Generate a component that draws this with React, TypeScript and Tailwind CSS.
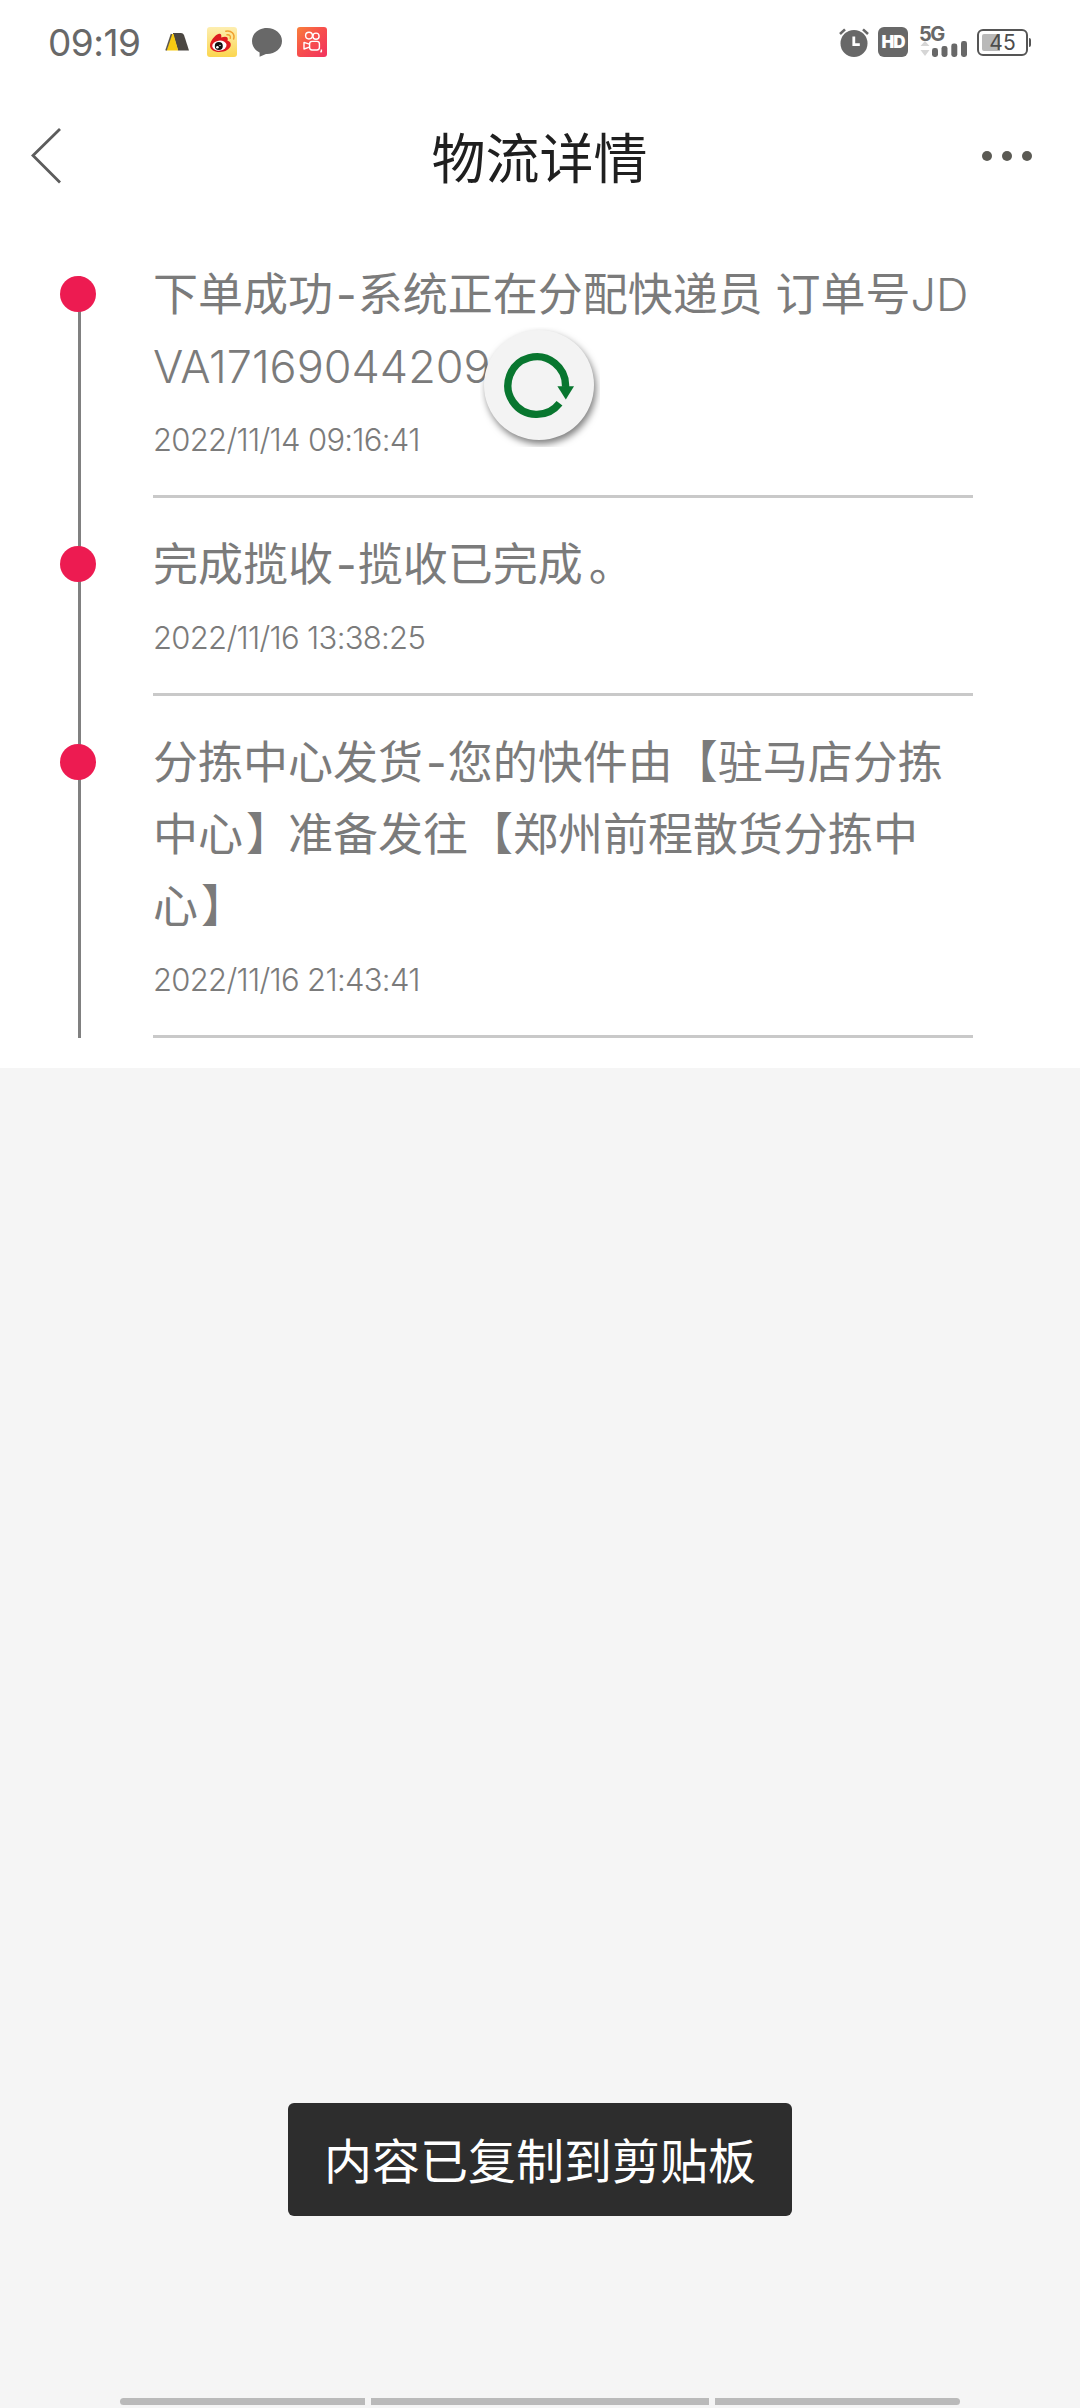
import type { ReactNode } from "react";

const Dash = () => <span className="pl-[3px] pr-[1px]">-</span>;
const Close = () => <span className="mr-[-3px] pl-[3px]">】</span>;

const steps: { lines: ReactNode[]; time: string }[] = [
  {
    lines: [
      <>下单成功<Dash />系统正在分配快递员 订单号<span className="font-[350]">JD</span></>,
      <span className="font-[350]">VA17169044209</span>,
    ],
    time: "2022/11/14 09:16:41",
  },
  {
    lines: [<>完成揽收<Dash />揽收已完成<span className="pl-1.5">。</span></>],
    time: "2022/11/16 13:38:25",
  },
  {
    lines: [
      <>分拣中心发货<Dash />您的快件由【驻马店分拣</>,
      <>中心<Close />准备发往【郑州前程散货分拣中</>,
      <>心<Close /></>,
    ],
    time: "2022/11/16 21:43:41",
  },
];

function TentIcon() {
  return (
    <svg width="24" height="18" viewBox="0 0 24 18">
      <path d="M8 0H16Q18 0 19 2L24 17.5H13L8 1Z" fill="#4b4742" />
      <path d="M6.2 1L8.5 1L13.2 17.5H1.6Z" fill="#f8cb12" />
      <path d="M6.5 1L1 17.5" stroke="#5a564e" strokeWidth="1.5" />
    </svg>
  );
}

function WeiboIcon() {
  return (
    <svg width="30" height="30" viewBox="0 0 30 30">
      <defs>
        <linearGradient id="wb" x1="0" y1="0" x2="0" y2="1">
          <stop offset="0" stopColor="#fdeeb0" />
          <stop offset="1" stopColor="#fbd64f" />
        </linearGradient>
      </defs>
      <rect width="30" height="30" rx="3" fill="url(#wb)" />
      <path
        d="M3 18.5C3 14 8 8 11.5 7C14 6.4 14.8 8 14.2 10.6C17 9.4 21 9 20.8 12.2C20.8 13 20.5 13.4 20.4 13.8C22.6 14.3 24 15.8 23.8 18C23.4 22.2 18 25 12.4 25C7 25 3 22.4 3 18.5Z"
        fill="#dd1a1f"
      />
      <ellipse cx="12.4" cy="18.6" rx="7.2" ry="5" fill="#fff" transform="rotate(-8 12.4 18.6)" />
      <circle cx="11.8" cy="19" r="4" fill="#111" />
      <circle cx="10.4" cy="20.2" r="1.3" fill="#fff" />
      <circle cx="13" cy="18.4" r="0.7" fill="#fff" />
      <path d="M18.8 4.2C24.2 3 28.3 7 26.6 12" fill="none" stroke="#f0a030" strokeWidth="1.5" strokeLinecap="round" />
      <path d="M20 7.8C22.6 7.4 24 9.2 23.2 11.4" fill="none" stroke="#f0a030" strokeWidth="1.4" strokeLinecap="round" />
    </svg>
  );
}

function ChatIcon() {
  return (
    <svg width="30" height="29" viewBox="0 0 30 29">
      <path
        d="M15 0C23.4 0 30 5.6 30 13C30 20.4 23.4 26 15 26H14L7.6 28.8V24.4C3 22.4 0 18.2 0 13C0 5.6 6.6 0 15 0Z"
        fill="#686868"
      />
    </svg>
  );
}

function KuaishouIcon() {
  return (
    <svg width="30" height="30" viewBox="0 0 30 30" fill="none" stroke="#fff" strokeWidth="1.4">
      <defs>
        <linearGradient id="ks" x1="0" y1="0" x2="1" y2="1">
          <stop offset="0" stopColor="#f9803a" />
          <stop offset="0.45" stopColor="#f7504c" />
          <stop offset="1" stopColor="#f2325f" />
        </linearGradient>
      </defs>
      <rect width="30" height="30" rx="3" fill="url(#ks)" stroke="none" />
      <circle cx="12" cy="8.6" r="3.4" />
      <circle cx="19" cy="9.2" r="3.1" />
      <rect x="12.6" y="14.4" width="9.8" height="8.6" rx="2.4" />
      <path d="M12.4 17.2L7 15.4V22L12.4 20.2" strokeLinejoin="round" />
      <path d="M24.4 22.6V24.2L23.6 25.4" />
    </svg>
  );
}

function AlarmIcon() {
  return (
    <svg width="30" height="30" viewBox="0 0 30 30">
      <circle cx="15" cy="16.4" r="13.5" fill="#686868" />
      <path d="M1 7L6 2.4M29 7L24 2.4" stroke="#686868" strokeWidth="2.6" />
      <path d="M14.8 9.4V17.6H20.8" fill="none" stroke="#fff" strokeWidth="2.8" />
    </svg>
  );
}

function SignalIcon() {
  return (
    <div className="flex h-[30px] w-[48px] flex-col justify-between">
      <span className="-ml-px h-[15px] text-[20px] leading-[15px] font-bold tracking-[-1.5px]">5G</span>
      <svg className="-mt-[2px]" width="48" height="17" viewBox="0 0 48 17" fill="#686868">
        <path d="M0.5 6L5 1L9.5 6ZM0.5 10H9.5L5 16Z" fill="#d6d6d6" />
        <rect x="12" y="8" width="6" height="9" rx="2.4" />
        <rect x="21.5" y="6" width="6" height="11" rx="2.4" />
        <rect x="31.3" y="3.5" width="6" height="13.5" rx="2.4" />
        <rect x="41" y="1" width="6" height="16" rx="2.4" />
      </svg>
    </div>
  );
}

function Battery() {
  return (
    <div className="flex items-center">
      <div className="relative flex h-[27px] w-[51px] items-center justify-center rounded-[6px] border-2 border-[#555] bg-white">
        <div className="absolute top-[3px] left-[3px] h-[17px] w-[18px] rounded-l-[2px] bg-[#b9b9b9]" />
        <span className="relative text-[21px] leading-none text-[#4c4c4c]">45</span>
      </div>
      <div className="ml-px h-[9px] w-[2px] rounded-r bg-[#555]" />
    </div>
  );
}

function StatusBar() {
  return (
    <div className="flex h-[84px] items-center pr-[49px] pl-[48px] text-[#686868]">
      <span className="w-[93px] text-[37px] leading-none tracking-[-0.5px]">09:19</span>
      <div className="ml-[24px] flex items-center gap-[15px]">
        <div className="mr-[3px]"><TentIcon /></div>
        <WeiboIcon />
        <ChatIcon />
        <KuaishouIcon />
      </div>
      <div className="ml-auto flex items-center">
        <AlarmIcon />
        <div className="ml-[9px] flex h-[30px] w-[30px] items-center justify-center rounded-[6px] bg-[#686868] text-[17px] leading-none font-black tracking-[-1px] text-white">
          HD
        </div>
        <div className="mr-[9px] ml-[12px]"><SignalIcon /></div>
        <Battery />
      </div>
    </div>
  );
}

function Header() {
  return (
    <div className="flex h-[144px] items-center pr-[48px] pl-[31px]">
      <svg width="50" height="56" viewBox="0 0 50 56" fill="none" stroke="#5c5c5c" strokeWidth="2.8">
        <path d="M29 1L2 27.5L29 54.5" />
      </svg>
      <h1 className="mr-[-16px] flex-1 pt-[7px] text-center text-[54px] leading-none text-[#1f1f1f]">物流详情</h1>
      <div className="flex w-[50px] justify-between">
        <span className="size-[10px] rounded-full bg-[#5b5a54]" />
        <span className="size-[10px] rounded-full bg-[#5b5a54]" />
        <span className="size-[10px] rounded-full bg-[#5b5a54]" />
      </div>
    </div>
  );
}

function Timeline() {
  return (
    <div className="pt-12 pb-[30px]">
      <ul className="ml-[78px] flex flex-col gap-12 border-l-3 border-[#808080]">
        {steps.map((step) => (
          <li key={step.time} className="relative pr-[107px] pl-[72px]">
            <span className="absolute top-0 -left-[21px] size-[36px] rounded-full bg-[#ed1b51]" />
            <div className="-mt-[17px] border-b-3 border-[#c9c9c9] pb-[18px] text-[#7b7b7b]">
              {step.lines.map((line, i) => (
                <p key={i} className="h-[72px] text-[45px] leading-[72px] whitespace-nowrap">{line}</p>
              ))}
              <p className="h-[74px] text-[31px] leading-[74px] font-[350] tracking-[-0.7px]">{step.time}</p>
            </div>
          </li>
        ))}
      </ul>
    </div>
  );
}

function RefreshButton() {
  return (
    <div className="absolute top-[327px] left-[480px] size-[120px] overflow-hidden">
      <div className="mt-[3px] ml-[4px] flex size-[110px] items-center justify-center rounded-full bg-[#f3f3f3] shadow-[2px_4px_7px_rgba(0,0,0,0.5)]">
        <svg width="110" height="110" viewBox="0 0 110 110" fill="none">
          <path d="M75.5 73.2A28.8 28.8 0 1 1 81.5 57" stroke="#08762f" strokeWidth="7.4" />
          <path d="M73.4 56.2H90L81.8 69.6Z" fill="#08762f" />
        </svg>
      </div>
    </div>
  );
}

export default function App() {
  return (
    <div className="relative flex h-[2408px] w-[1080px] flex-col bg-[#f5f5f5] font-normal [font-family:Inter,'Noto_Sans_CJK_SC',sans-serif]">
      <div className="bg-white">
        <StatusBar />
        <Header />
        <Timeline />
      </div>

      <div className="mt-auto mb-[3px] flex h-[7px] justify-center gap-[6px]">
        <div className="w-[245px] rounded-l-full bg-[#bababa]" />
        <div className="w-[338px] bg-[#bababa]" />
        <div className="w-[245px] rounded-r-full bg-[#bababa]" />
      </div>

      <RefreshButton />
      <div className="absolute top-[2103px] left-[288px] flex h-[113px] w-[504px] items-center justify-center rounded-[6px] bg-[#2d2d2d] pt-[4px] text-[48px] leading-none text-white">
        内容已复制到剪贴板
      </div>
    </div>
  );
}
